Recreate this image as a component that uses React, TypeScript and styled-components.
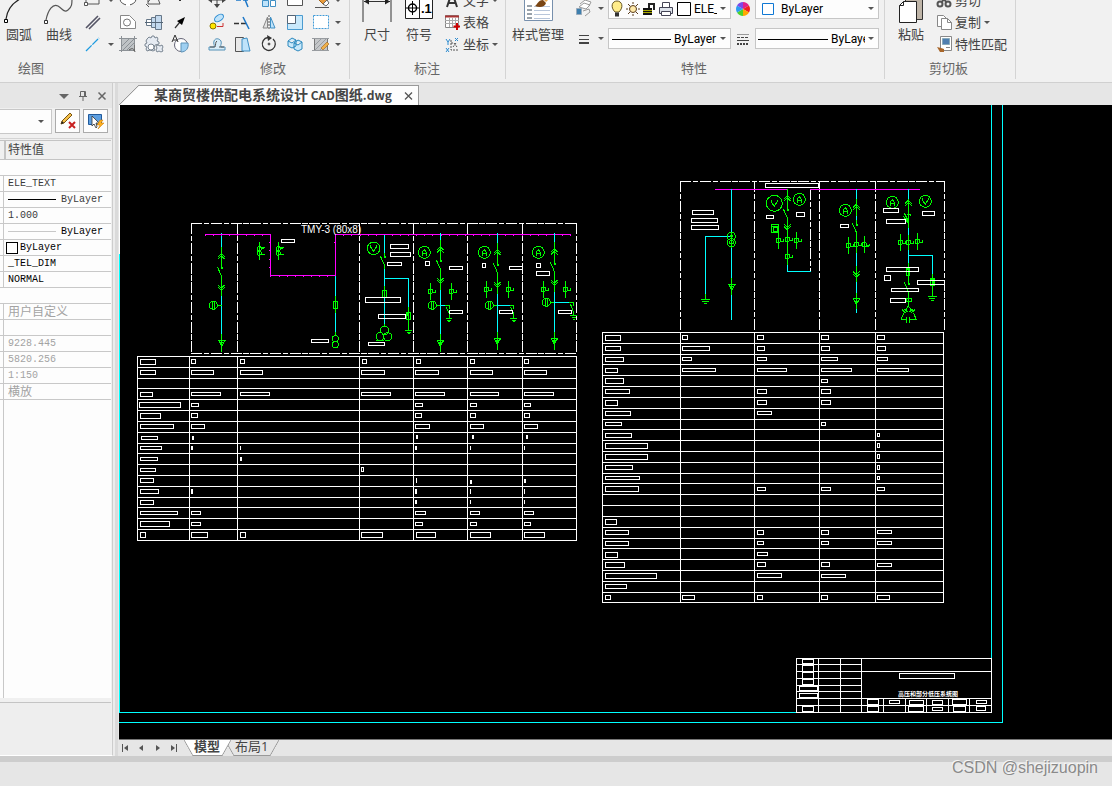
import React from "react";
import styled, { createGlobalStyle } from "styled-components";

const UI_FONT = `"Open Sans", "Noto Sans CJK SC", sans-serif`;
const GRID_FONT = `"Liberation Mono", "Noto Sans CJK SC", monospace`;

const GlobalStyle = createGlobalStyle`
  *, *::before, *::after { box-sizing: border-box; }
  body { margin: 0; background: #e6e6e6; font-family: ${UI_FONT}; font-size: 13px; color: #444; }
  button, select { font: inherit; color: inherit; }
  button { border: 0; padding: 0; background: none; }
`;

const Page = styled.div`
  display: flex;
  flex-direction: column;
  min-height: 100vh;
  position: relative;
  overflow: hidden;
`;

/* ---------- ribbon ---------- */

const Ribbon = styled.header`
  display: flex;
  background: #f1f1f1;
  border-bottom: 1px solid #d0d0d0;
  height: 83px;
  overflow: hidden;
`;

const Group = styled.section<{ $pad?: string }>`
  display: flex;
  flex-direction: column;
  flex: none;
  height: 79px;
  border-right: 1px solid #d4d4d4;
  padding: ${(p) => p.$pad ?? "0"};
`;

const GroupBody = styled.div`
  display: flex;
  align-items: flex-end;
  height: 55px;
  overflow: hidden;
`;

const GroupLabel = styled.h2<{ $left?: boolean }>`
  margin: 0;
  padding-top: 3px;
  padding-left: ${(p) => (p.$left ? "18px" : "0")};
  text-align: ${(p) => (p.$left ? "left" : "center")};
  font-size: 13px;
  font-weight: 400;
  line-height: 20px;
  color: #666;
`;

const BigButton = styled.button<{ $w: number }>`
  display: flex;
  flex-direction: column;
  align-items: center;
  flex: none;
  width: ${(p) => p.$w}px;
  white-space: nowrap;
  > span { line-height: 20px; height: 20px; }
  > i { height: 11px; padding-top: 3px; }
`;

const IconGrid = styled.div<{ $cols: string }>`
  display: grid;
  grid-template-columns: ${(p) => p.$cols};
  grid-auto-rows: 22px;
`;

const Tool = styled.button`
  display: grid;
  place-items: center;
`;

const ToolList = styled.div`
  display: flex;
  flex-direction: column;
  margin-left: 4px;
`;

const ListTool = styled.button`
  display: flex;
  align-items: center;
  height: 22px;
  white-space: nowrap;
  gap: 3px;
  line-height: 20px;
`;

const Caret = styled.span`
  display: inline-block;
  width: 0;
  height: 0;
  border: 3px solid transparent;
  border-top-color: #555;
  border-bottom: 0;
`;

const CaretCell = styled.span`
  display: grid;
  place-items: center;
`;

const FieldGrid = styled.div`
  display: grid;
  grid-template-columns: 20px 14px 123px 24px 124px;
  grid-auto-rows: 21px;
  row-gap: 9px;
  margin-left: 7px;
  padding-bottom: 6px;
`;

const Field = styled.label`
  display: flex;
  align-items: center;
  gap: 3px;
  min-width: 0;
  padding: 0 4px 0 2px;
  background: #fdfdfd;
  border: 1px solid #c6c6c6;
  color: #000;
  svg { flex: none; }
`;

const FieldSelect = styled.select`
  appearance: none;
  flex: 1;
  min-width: 0;
  border: 0;
  padding: 0;
  background: transparent;
  font-family: Roboto, "Noto Sans CJK SC", sans-serif;
  font-size: 12px;
  line-height: 18px;
  outline: 0;
`;

/* ---------- work area ---------- */

const Main = styled.main`
  display: flex;
  flex: 1;
  min-height: 0;
`;

const SidePanel = styled.aside`
  display: flex;
  flex-direction: column;
  width: 113px;
  flex: none;
  background: #f0f0f0;
  border-right: 1px solid #cdcdcd;
  border-bottom: 1px solid #fff;
`;

const Splitter = styled.div`
  width: 6px;
  flex: none;
  background: #dadada;
  border-left: 2px solid #ececec;
  border-right: 1px solid #e6e6e6;
`;

const PanelTitle = styled.div`
  display: flex;
  justify-content: flex-end;
  align-items: center;
  gap: 9px;
  height: 25px;
  padding-right: 5px;
  background: #e6e6e6;
  button { display: grid; }
`;

const PanelTools = styled.div`
  display: flex;
  gap: 3px;
  height: 30px;
  padding-top: 1px;
`;

const ObjectPicker = styled.label`
  display: flex;
  align-items: center;
  width: 52px;
  height: 25px;
  padding-right: 7px;
  background: #fdfdfd;
  border: 1px solid #c8c8c8;
  border-left: 0;
`;

const PanelButton = styled.button`
  display: grid;
  place-items: center;
  width: 25px;
  height: 24px;
  background: #fdfdfd;
  border: 1px solid #ababab;
`;

const PropertyArea = styled.div`
  display: flex;
  flex-direction: column;
  flex: 1;
  border-top: 1px solid #d4d4d4;
  padding: 1px 1px 0 0;
`;

const PropertyTable = styled.table`
  width: 100%;
  table-layout: fixed;
  border-spacing: 0;
  background: #fdfdfd;
  font-family: ${GRID_FONT};
  font-size: 10px;
  line-height: 15px;
`;

const HeadCell = styled.th`
  height: 20px;
  padding: 2px 0 0 2px;
  background: #f0f0f0;
  border-top: 1px solid #c4c4c4;
  border-bottom: 1px solid #c4c4c4;
  border-left: 2px solid #c4c4c4;
  text-align: left;
  font-size: 12px;
  font-weight: 400;
  line-height: 16px;
`;

const KeyHead = styled.th`
  width: 4px;
  padding: 0;
  background: #f0f0f0;
  border-top: 1px solid #c4c4c4;
  border-bottom: 1px solid #c4c4c4;
`;

const Cell = styled.td<{ $tone?: "dim" | "black" }>`
  height: 16px;
  padding: 0 0 0 4px;
  border-bottom: 1px solid #c8c8c8;
  white-space: nowrap;
  color: ${(p) => (p.$tone === "dim" ? "#a3a3a3" : p.$tone === "black" ? "#000" : "#3a3a3a")};
`;

const KeyCell = styled.td`
  padding: 0;
  border-right: 1px solid #c8c8c8;
  border-bottom: 1px solid #c8c8c8;
`;

const CellLine = styled.span<{ $big?: boolean }>`
  display: flex;
  align-items: center;
  gap: 5px;
  height: 15px;
  padding-top: ${(p) => (p.$big ? "3px" : "0")};
  font-size: ${(p) => (p.$big ? "12px" : "10px")};
`;

const Swatch = styled.span`
  width: 12px;
  height: 12px;
  margin: 0 -3px 0 -2px;
  border: 1px solid #000;
  background: #fff;
`;

const Stroke = styled.span<{ $light?: boolean }>`
  width: 48px;
  height: 1px;
  background: ${(p) => (p.$light ? "#c8c8c8" : "#000")};
`;

const PropertyRest = styled.div`
  flex: 1;
  background: linear-gradient(#c8c8c8, #c8c8c8) 3px 0 / 1px 100% no-repeat #fdfdfd;
`;

const PropertyHint = styled.div`
  height: 57px;
  border-top: 4px solid #f0f0f0;
  margin-right: 1px;
  background: #eee;
  box-shadow: inset 0 1px #c4c4c4;
`;

const Workspace = styled.div`
  display: flex;
  flex-direction: column;
  flex: 1;
  min-width: 0;
`;

const DocBar = styled.nav`
  display: flex;
  align-items: flex-end;
  height: 22px;
  background: #e6e6e6;
`;

const DocTab = styled.div`
  display: flex;
  align-items: center;
  height: 20px;
  padding-right: 5px;
  background: #fdfdfd;
  border: solid #999;
  border-width: 1px 1px 0 0;
  margin-left: 20px;
  position: relative;
  &::before {
    content: "";
    position: absolute;
    right: 100%;
    top: -1px;
    width: 20px;
    height: 20px;
    background: linear-gradient(to bottom right, transparent 48%, #999 50%, #fdfdfd 53%);
  }
`;

const DocName = styled.a`
  padding: 0 12px 2px 15px;
  font-family: "Noto Sans CJK SC", sans-serif;
  font-size: 14px;
  line-height: 18px;
  font-weight: 700;
  color: #444;
  text-decoration: none;
  white-space: nowrap;
`;

const Latin = styled.span`
  font-size: 12px;
`;

const IconButton = styled.button`
  display: grid;
  place-items: center;
`;

const Canvas = styled.div`
  flex: 1;
  min-height: 0;
  display: flex;
  background: #000;
  > svg { display: block; width: 100%; height: auto; flex: 1; }
`;

const LayoutBar = styled.nav`
  display: flex;
  align-items: stretch;
  height: 17px;
  background: #e6e6e6;
  border-top: 1px solid #777;
`;

const Steps = styled.div`
  display: flex;
  align-items: center;
  justify-content: space-between;
  width: 59px;
  margin-right: 6px;
  padding-left: 2px;
`;

const LayoutTab = styled.a<{ $on?: boolean }>`
  display: flex;
  color: #444;
  font-weight: ${(p) => (p.$on ? 700 : 400)};
  text-decoration: none;
  line-height: 13px;
  margin-right: -6px;
  z-index: ${(p) => (p.$on ? 1 : 0)};
  > span {
    background: ${(p) => (p.$on ? "#fff" : "#e6e6e6")};
    border-bottom: 1px solid #999;
    padding: 0 2px 0 1px;
  }
  &::before, &::after {
    content: "";
    width: 9px;
    background: linear-gradient(to top right, transparent 46%, #999 50%, ${(p) => (p.$on ? "#fff" : "#e6e6e6")} 56%);
  }
  &::after {
    background: linear-gradient(to top left, transparent 46%, #999 50%, ${(p) => (p.$on ? "#fff" : "#e6e6e6")} 56%);
  }
`;

const StatusBar = styled.footer`
  height: 30px;
  background: #e6e6e6;
  border-top: 6px solid #cdcdcd;
`;

const Watermark = styled.p`
  position: absolute;
  right: 14px;
  bottom: 8px;
  margin: 0;
  font: 16px/20px "Liberation Sans", sans-serif;
  color: #8a8a8a;
  text-shadow: -1px -1px 0 #f6f6f6;
`;

/* ---------- icons ---------- */

type IconProps = { w?: number; h?: number; children: React.ReactNode };
const Icon = ({ w = 20, h = 20, children }: IconProps) => (
  <svg width={w} height={h} viewBox={`0 0 ${w} ${h}`} fill="none" stroke="#555" aria-hidden="true">
    {children}
  </svg>
);

const drawTools: Record<string, React.ReactNode> = {
  rect: <><path d="M3 3h13v11H3z" /><path d="M1.500 12.500h3v3h-3zM14.500 1.500h3v3h-3z" fill="#fff" /></>,
  ellipse: <><ellipse cx="10" cy="9" rx="8" ry="6" fill="#fff" /><path d="M8 13h4v3H8z" fill="#fff" stroke="none" /></>,
  outline: <path d="M4 2v12h12M2 14l3 3M4 12l8-9 4 11" />,
  point: <path d="M9 9h2v2H9z" fill="#333" stroke="none" />,
  doubleLine: <path d="M3 16L15 4M6 17L17 6" stroke="#556" strokeWidth="1.600" />,
  cloud: <><path d="M2.500 3.500h9l6 6v7h-15z" fill="#fff" stroke="#888" /><circle cx="9" cy="10.500" r="3.500" stroke="#777" /></>,
  shaft: <><path d="M2.500 7.500h5v6h-5z" fill="#fff" stroke="#678" /><path d="M7.500 5.500h4v10h-4zM11.500 3.500h6v14h-6z" fill="#c3d9ee" stroke="#678" /><path d="M1 10.500h18" stroke="#567" /></>,
  arrow: <><path d="M5 16l5-6" stroke="#333" strokeWidth="1.200" /><path d="M15 5L7 9l5 4z" fill="#000" stroke="none" /></>,
  line: <path d="M3 17L16 4" stroke="#1c9be0" strokeWidth="1.300" strokeDasharray="8 1" />,
  hatch: <><path d="M3.500 4.500h13v12h-13z" fill="#bfc3c6" stroke="#777" /><path d="M1 4.500h18M1 16.500h14M3.500 2v16M16.500 2v9M4 12l7-7M5 16L16 5M9 16l7-7" stroke="#8c9196" /><path d="M17 18c-1-4-3-4-6-2" /></>,
  gears: <><path d="M5 3l2 1 1-2h2l1 2 2-1 1 2-1 2 2 1v2l-4 1-1 3 1 2-2 1-3-1-3 1-1-2 1-2-2-1v-2l2-1-1-2 1-2z" fill="#e6ebf2" stroke="#7a8692" /><circle cx="7" cy="13" r="3" fill="#fff" stroke="#7a8692" /><path d="M12 12l2-1 2 1 2-1 1 2-1 2 1 2-2 1-2-1-2 1-1-2 1-2z" fill="#e6ebf2" stroke="#7a8692" /></>,
  sector: <><circle cx="11" cy="11" r="6.500" fill="#fff" stroke="#667" /><path d="M11 9h7c1 5-2 9-7 9z" fill="#9fd0f2" stroke="#5f93b8" /><path d="M2 8l3-7 3 7M3 6h4" stroke="#333" /></>,
};

const editTools: Record<string, React.ReactNode> = {
  move: <><path d="M10 2v15M3 10h14" stroke="#444" /><path d="M7 14l3 4 3-4zM5 7l-4 3 4 3zM15 7l4 3-4 3z" fill="#444" stroke="none" /></>,
  trim: <path d="M3 10h5M10 10h5M9 2l6 15" stroke="#1e78c8" strokeWidth="1.500" />,
  array: <><path d="M3.500 10.500h6v6h-6zM11.500 2.500h5v6h-5z" fill="#bfe3fa" stroke="#3f8fc4" /><path d="M11.500 10.500h5v6h-5zM3.500 2.500h6v6h-6z" fill="#fff" stroke="#3f8fc4" /></>,
  frame: <path d="M2.500 2.500h15v13h-15z" fill="#fff" />,
  erase: <><path d="M3 5l4-4 10 10-4 4z" fill="#e89b3c" stroke="#a15f16" /><path d="M12 14l4-4 2 3-3 3z" fill="#fff" stroke="#666" /><path d="M4 17.500h14" /></>,
  copy: <><ellipse cx="12" cy="6" rx="5" ry="3" fill="#bfe3fa" stroke="#2b8bd0" transform="rotate(-35 12 6)" /><circle cx="6" cy="14" r="3" fill="#ffe600" stroke="#8a7400" /><path d="M10 14.500h6V11" stroke="#c33" /></>,
  extend: <><path d="M1 11.500h5M8 11.500h5" stroke="#333" strokeWidth="1.500" /><path d="M10 5l6 12" stroke="#1e78c8" strokeWidth="1.500" /></>,
  mirror: <><path d="M8.500 5v11H4z" fill="#e4e4e4" stroke="#888" /><path d="M11.500 5v11H16z" fill="#bfe3fa" stroke="#3f8fc4" /><path d="M10 3v15" strokeDasharray="2 1" /></>,
  scale: <><path d="M2.500 3.500h15v14h-15z" fill="#c9e9fb" stroke="#4a9bd0" /><path d="M2.500 3.500h8v8h-8z" fill="#fff" stroke="#567" /></>,
  dash: <path d="M2.500 3.500h15v13h-15z" fill="#fff" stroke="#3f9bd8" strokeDasharray="2 1" />,
  offset: <><path d="M2 16h16v-3h-4c-1-2 1-3 0-6-2-3-6-3-7 0-1 3 1 4 0 6H2z" fill="#d8ecf8" stroke="#5592b8" /><path d="M3 13h5c1-2 0-5 2-6M12 13h5" /></>,
  stretch: <><path d="M2.500 3.500h8v14h-8z" fill="#e9e9e9" /><path d="M9 5l5-1 3 13H9z" fill="#bfe3fa" stroke="#3f8fc4" /></>,
  rotate: <><path d="M14 5a6.500 6.500 0 1 1-5-1.500" stroke="#333" strokeWidth="1.300" /><path d="M8 1l5 3-4 3z" fill="#333" stroke="none" /><circle cx="10" cy="10" r="1" fill="#333" /></>,
  blocks: <path d="M3 7l4-3 4 2v6l-4 2-4-2zM9 9l4-3 4 2v7l-4 2-4-2zM3 7l4 2 4-3M9 9l4 2 4-3" fill="#c9e9fb" stroke="#2b88bd" />,
  hatchEdit: <><path d="M3.500 4.500h13v12h-13z" fill="#c5c7c9" stroke="#777" /><path d="M1 4.500h17M1 16.500h17M4 11l6-6M4 16L15 5M9 16l7-7" stroke="#989ca0" /><path d="M10 14l6-6 2 2-6 6z" fill="#f0b04a" stroke="#a0641a" strokeWidth=".6" /></>,
};

const ToolIcon = ({ set, name }: { set: Record<string, React.ReactNode>; name: string }) => (
  <Tool type="button" aria-label={name}><Icon>{set[name]}</Icon></Tool>
);

const SmallCaret = () => <CaretCell><Caret /></CaretCell>;

/* ---------- drawing sheet ---------- */

/* The sheet geometry is stored in thirds of a screen pixel. */
const View = ({ x, y, children }: { x: number; y: number; children: React.ReactNode }) => (
  <g transform={`translate(${x} ${y}) scale(${1 / 3})`}>{children}</g>
);

const Boxes = ({ list }: { list: number[][] }) => (
  <path
    stroke="#fff"
    d={list
      .map(([a, b, c, d]) =>
        c - a <= 6
          ? `M${(a + c) / 2} ${b}V${d}`.repeat(1) + (c - a > 3 ? `M${a + 1.5} ${b}V${d}M${c - 1.5} ${b}V${d}` : "")
          : `M${a + 1.5} ${b + 1.5}H${c - 1.5}V${d - 1.5}H${a + 1.5}Z`
      )
      .join("")}
  />
);

const Grid = ({ xs, ys }: { xs: number[]; ys: number[] }) => (
  <path
    stroke="#fff"
    d={
      xs.map((x) => `M${x} ${ys[0] - 1}V${ys[ys.length - 1] + 1}`).join("") +
      ys.map((y) => `M${xs[0] - 1} ${y}H${xs[xs.length - 1] + 1}`).join("")
    }
  />
);

const G = ({ d }: { d: string }) => <path stroke="#0f0" d={d} />;
const C = ({ d }: { d: string }) => <path stroke="#0ff" d={d} />;
const M = ({ d }: { d: string }) => <path stroke="#f0f" d={d} />;
const Ring = ({ x, y, r }: { x: number; y: number; r: number }) => <circle cx={x} cy={y} r={r} stroke="#0f0" />;

const Meter = ({ x, y, r = 18, kind }: { x: number; y: number; r?: number; kind: "A" | "V" }) => (
  <>
    <Ring x={x} y={y} r={r} />
    <G
      d={
        kind === "A"
          ? `M${x - 7} ${y + 10}V${y}L${x} ${y - 9}L${x + 6} ${y}V${y + 10}M${x - 7} ${y + 3}H${x + 6}`
          : `M${x - 9} ${y - 10}V${y - 4}L${x} ${y + 9}L${x + 8} ${y - 4}V${y - 10}`
      }
    />
  </>
);

const up = (x: number, y: number) =>
  `M${x - 10} ${y + 9}L${x} ${y}L${x + 10} ${y + 9}M${x - 10} ${y + 16}L${x} ${y + 7}L${x + 10} ${y + 16}`;
const down = (x: number, y: number) =>
  `M${x - 10} ${y}L${x} ${y + 9}L${x + 10} ${y}M${x - 10} ${y + 7}L${x} ${y + 16}L${x + 10} ${y + 7}`;
const blade = (x: number, y: number) => `M${x - 12} ${y - 2}L${x} ${y + 25}M${x - 2} ${y}H${x + 5}M${x - 2} ${y + 3}H${x + 5}`;
const drop = (x: number, y: number) => `M${x - 11} ${y}H${x + 12}M${x - 8} ${y + 2}L${x} ${y + 17}L${x + 9} ${y + 2}M${x - 4} ${y + 7}H${x + 5}`;
const earth = (x: number, y: number) => `M${x - 10} ${y}H${x + 10}M${x - 6} ${y + 5}H${x + 7}M${x - 3} ${y + 10}H${x + 4}`;

const Sensor = ({ x, y, bar = true }: { x: number; y: number; bar?: boolean }) => (
  <>
    <Ring x={x} y={y} r={7} />
    <G d={`${bar ? `M${x} ${y - 26}V${y + 26}` : ""}M${x + 6} ${y + 2}H${x + 16}V${y - 3}M${x + 9} ${y + 4}H${x + 13}`} />
  </>
);

const Coil = ({ x, y }: { x: number; y: number }) => (
  <>
    <Ring x={x} y={y} r={12} />
    <G d={`M${x - 4} ${y - 11}V${y + 11}M${x + 4} ${y - 11}V${y + 11}`} />
  </>
);

const Feeder = ({ x, a, s, b, t, end }: { x: number; a: number; s: number; b: number; t: number; end: number }) => (
  <>
    <C d={`M${x} 55V${a}M${x} ${b + 20}V${t - 18}`} />
    <G d={`M${x} ${a - 20}V${s}M${x} ${s + 25}V${b + 36}M${x} ${t - 18}V${end}${up(x, a)}${blade(x, s)}${down(x, b)}${drop(x, t)}`} />
  </>
);

const ticks = (xs: number[], y: number) => xs.map((x) => `M${x} ${y}V${y + 5}`).join("");
const DASH = "33 5 16 5";

const leftBoxes = [
  [30,27,78,45],[183,27,198,42],[330,27,345,42],[696,27,711,42],[858,27,873,42],[1020,27,1035,42],[1182,27,1197,42],
  [30,60,78,75],[183,60,252,75],[330,60,399,75],[693,60,765,75],[855,60,927,75],[1020,60,1089,75],[1182,60,1251,75],
  [30,126,69,141],[183,126,273,138],[330,126,420,138],[693,126,783,138],[855,126,945,138],[1020,126,1107,138],[1182,126,1272,138],
  [27,156,153,174],[183,159,207,171],[855,159,879,171],[1020,159,1041,171],[1182,159,1203,171],
  [30,189,93,207],[183,189,204,204],[855,189,876,204],[1020,189,1038,204],[1182,189,1200,204],
  [30,222,132,237],[183,222,225,237],[855,222,900,237],[1020,222,1062,237],[1182,222,1224,237],
  [33,258,84,270],[186,258,192,270],[858,255,864,267],[1026,255,1032,267],[1188,255,1194,267],
  [30,288,96,300],[183,288,189,300],[330,288,333,300],[855,288,861,300],[1020,288,1023,300],[1182,288,1185,300],
  [30,321,84,333],[330,321,336,333],
  [30,354,78,366],[693,351,702,366],
  [30,384,72,399],[858,384,861,399],[1020,390,1026,402],[1182,387,1188,399],
  [30,417,87,432],[183,417,189,432],[855,417,861,432],[1020,417,1023,432],[1182,417,1185,432],
  [30,450,72,465],[855,450,861,462],[1020,450,1023,462],[1182,450,1185,462],
  [30,483,144,495],[183,483,213,495],[855,483,888,495],[1020,483,1050,495],[1182,483,1212,495],
  [30,513,120,531],[183,516,213,528],[855,516,879,528],[1020,516,1041,528],[1182,516,1203,528],
  [30,546,48,564],[183,546,234,564],[330,546,348,564],[693,546,759,564],[858,546,918,564],[1020,546,1083,564],[1182,546,1245,564],
];

const rightBoxes = [
  [30,21,78,39],[261,21,279,36],[486,21,507,36],[678,21,702,36],[846,21,870,36],
  [30,54,78,69],[261,54,345,69],[486,54,510,69],[678,54,705,69],[846,54,873,69],
  [30,87,87,102],[261,87,291,99],[486,87,516,99],[678,87,729,99],[846,87,879,99],
  [30,120,69,135],[261,120,363,132],[486,120,576,132],[678,120,771,132],[846,120,942,132],
  [30,150,87,168],[678,153,699,165],
  [30,183,105,198],[486,183,516,198],[678,183,708,198],
  [30,216,69,234],[486,216,516,231],[678,216,708,231],
  [30,249,108,264],[486,249,531,261],
  [30,282,81,294],[678,282,693,294],
  [30,315,111,330],[846,315,855,327],
  [30,345,159,363],[846,345,855,360],
  [30,378,159,396],[846,378,855,393],
  [30,411,114,426],[846,411,855,426],
  [30,444,135,456],[846,444,855,456],
  [30,474,132,492],[486,477,513,489],[678,477,708,489],[846,477,870,489],
  [30,573,66,591],
  [30,606,102,621],[486,606,507,621],[678,606,702,621],[846,606,891,618],
  [30,639,102,654],[486,639,507,651],[678,639,702,651],[846,639,891,651],
  [30,672,69,690],[486,672,519,684],
  [30,702,90,720],[486,702,513,717],[678,702,705,717],[846,705,891,717],
  [30,735,186,753],[486,735,561,750],[678,738,753,750],
  [30,768,96,783],
  [30,801,48,816],[261,801,300,816],[486,801,504,816],[678,801,699,816],[846,801,885,816],
];

const Drawing = () => (
  <svg viewBox="119 105 993 634" preserveAspectRatio="xMinYMin slice" role="img" aria-label="供配电系统图">
    <g fill="none" strokeWidth="3" shapeRendering="crispEdges">
      {/* sheet border */}
      <g strokeWidth="1">
        <path stroke="#fff" d="M119.500 105V254" />
        <path stroke="#0ff" d="M119.500 254V712.500H796M119 722.500H1002.500V105M991.500 105V658" />
      </g>

      {/* low-voltage diagram, incoming side */}
      <View x={185} y={215}>
        <path stroke="#fff" strokeDasharray={DASH} d="M19 25H1175M19 415H1175M19 25V415M157 25V415M523 25V415" />
        <C d="M109 55V98M109 243V357M451 184V243M451 293V351" />
        <M d={`M60 58H257V181H451V58H1158${ticks([62, 86, 110, 134, 158, 183, 208, 232], 58)}${ticks([257, 282, 306, 330, 355, 380, 404, 428], 181)}M251 82H257M251 106H257M251 133H257M251 157H257M451 82H447${ticks([476, 500, 525, 550, 574], 58)}`} />
        <G d={`M109 95V158M109 181V243M109 357V410${up(109, 116)}${blade(109, 157)}${down(109, 210)}${drop(110, 376)}M97 271H110`} />
        <Coil x={85} y={271} />
        <G d="M223 81V135M280 81V135M230 98H240M230 103L238 98M230 118H240M287 98H297M287 103L295 98M287 118H297" />
        <Ring x={223} y={101} r={6} /><Ring x={223} y={115} r={6} />
        <Ring x={280} y={101} r={6} /><Ring x={280} y={115} r={6} />
        <G d="M451 243V361M445 259H458V280H445Z" />
        <C d="M451 293V350" />
        <Ring x={451} y={371} r={9} /><Ring x={451} y={389} r={9} />
        <Boxes list={[[288,72,330,84],[378,372,432,384]]} />
        <Meter x={566} y={100} r={19} kind="V" />
      </View>

      {/* low-voltage diagram, outgoing feeders */}
      <View x={380} y={215}>
        <path stroke="#fff" strokeDasharray={DASH} d="M100 25V415M262 25V415M427 25V415M589 25V415" />
        <M d={ticks([13, 37, 61, 86, 110, 134, 158, 183, 208, 232, 256, 280, 305, 329, 353, 377, 401, 426, 450, 475, 499, 523, 547, 571], 58)} />
        <C d="M13 60V113M13 160V213M13 190H86V276M13 247V327" />
        <G d={`M13 113V128M13 150V162M13 213V250M7 226H18V247H7ZM86 276V345M79 292H92V314H79Z${blade(13, 125)}${earth(86, 346)}M13 327V335M-12 376H12M82 292V304`} />
        <Ring x={13} y={347} r={13} /><Ring x={0} y={365} r={12} /><Ring x={23} y={365} r={12} />
        <Boxes list={[[30,87,87,102],[30,111,93,126],[21,141,66,153],[-45,246,63,264],[-6,297,78,312],[-36,381,15,393]]} />

        <Feeder x={181} a={96} s={137} b={189} t={376} end={410} />
        <Feeder x={352} a={104} s={147} b={201} t={370} end={404} />
        <Feeder x={523} a={102} s={144} b={195} t={370} end={404} />
        <Meter x={133} y={112} kind="A" /><Meter x={313} y={112} kind="A" /><Meter x={475} y={112} kind="A" />
        <Sensor x={151} y={229} /><Sensor x={214} y={229} />
        <Sensor x={319} y={223} /><Sensor x={385} y={223} />
        <Sensor x={490} y={223} /><Sensor x={556} y={223} />
        <Coil x={157} y={271} /><Coil x={328} y={271} /><Coil x={499} y={262} />
        <C d="M181 271H195M352 271H395M523 262H568" />
        <G d={`M169 271H181M195 271H209V281M198 276L207 294M207 294V310${earth(207, 310)}M340 271H352M390 271H401V281M391 276L400 294V310${earth(401, 310)}M511 262H523M566 262H581V272M571 266L579 288V302${earth(581, 302)}`} />
        <Boxes list={[[135,138,150,153],[207,153,249,165],[207,285,249,297],[306,144,318,159],[387,153,429,165],[357,285,399,297],[468,144,483,159],[468,168,510,183],[534,285,576,297]]} />
      </View>

      {/* high-voltage diagram */}
      <View x={675} y={175}>
        <path stroke="#fff" strokeDasharray={DASH} d="M16 19H808M16 19V480M238 19V472M433 19V472M601 19V472M808 19V472M406 43V290" />
        <M d="M120 43H338M406 43H735" />
        <C d="M169 43V434M169 184H91V358M337 270V289H407M544 43V140M544 233V413M700 43V72M700 158V276M700 241H772V298" />
        <G d={`M91 357V372M78 373H105M82 379H101M87 385H96M169 170V218M169 310V360${drop(170, 328)}`} />
        <Ring x={169} y={184} r={12} /><Ring x={169} y={203} r={12} />
        <G d="M164 179L175 187M175 179L164 187M162 200L169 195L176 200V206H162Z" />

        <G d={`M337 43V104M337 125V270${up(337, 62)}${blade(337, 104)}${down(337, 148)}`} />
        <Meter x={298} y={85} r={24} kind="V" /><Meter x={373} y={73} kind="A" />
        <Sensor x={310} y={196} /><Sensor x={337} y={193} bar={false} /><Sensor x={364} y={196} /><Sensor x={337} y={244} bar={false} />
        <path stroke="#0f0" d="M290 149H310V172H290ZM294 156H306V169H294ZM290 153H310" />

        <G d={`M544 72V122M544 136V150M544 168V233M544 273V321M544 353V402${up(544, 88)}${blade(544, 147)}${down(544, 290)}${drop(544, 371)}`} />
        <Meter x={511} y={106} kind="A" />
        <Sensor x={520} y={211} /><Sensor x={544} y={208} bar={false} /><Sensor x={568} y={209} />

        <G d={`M700 72V158M700 180V225M700 264V328M700 350V396${up(700, 76)}M687 115L700 136M684 122L700 145M690 118L697 136L692 140M697 118H705V122${blade(700, 324)}`} />
        <Meter x={652} y={82} kind="A" /><Meter x={751} y={79} kind="V" />
        <Sensor x={676} y={202} /><Sensor x={700} y={202} bar={false} /><Sensor x={727} y={199} />
        <G d="M694 279H704V302H694ZM697 282H703V300M772 297V363M766 310H777V331H766ZM769 314H775V328M758 364H786M763 370H781M767 376H777M694 370H710V380H694Z" />
        <G d="M700 393L690 408M700 393L712 408M681 404L692 414M720 404L708 414M686 414L679 432H695M716 414L723 432H704M695 426V444M704 426V444M688 402L698 412M712 402L703 412" />
        <Boxes list={[[270,24,432,39],[51,105,117,120],[48,129,129,144],[48,150,132,165],[273,120,297,132],[363,111,390,126],[495,147,522,159],[624,99,672,114],[633,132,693,147],[741,108,780,123],[633,276,732,291],[627,300,648,318],[726,315,810,330],[648,339,732,351],[645,369,693,384]]} />
      </View>

      {/* parameter tables */}
      <View x={130} y={350}>
        <Grid xs={[22,178,322,688,850,1012,1177,1339]} ys={[19,52,85,115,148,181,214,247,280,310,343,376,409,442,472,505,538,571]} />
        <Boxes list={leftBoxes} />
      </View>
      <View x={595} y={328}>
        <Grid xs={[22,256,478,673,841,1045]} ys={[13,46,79,109,142,175,208,241,274,304,337,370,403,436,466,499,532,565,598,631,661,694,727,760,793,823]} />
        <Boxes list={rightBoxes} />
      </View>

      {/* title block */}
      <View x={785} y={650}>
        <path stroke="#fff" d="M34 25H619V187H34ZM100 25V187M166 25V187M229 25V187M34 43H229M34 64H619M34 85H229M34 106H229M34 124H229M34 145H619M34 166H619M295 145V187M361 145V187M424 145V187M490 145V187M553 145V187" />
        <Boxes list={[[51,27,87,42],[51,45,87,66],[51,66,87,87],[51,87,87,105],[42,108,99,123],[42,129,99,144],[51,168,87,186],[342,69,510,87],[246,147,282,165],[246,168,282,186],[312,150,345,162],[372,150,417,165],[369,168,417,186],[441,150,474,165],[441,171,474,183],[501,147,546,165],[504,168,543,186],[573,150,606,162],[573,168,603,183]]} />
      </View>
    </g>
    <g fill="#fff" fontFamily='"Liberation Sans", "Noto Sans CJK SC", sans-serif'>
      <text x="301" y="233" fontSize="10">TMY-3 (80x8)</text>
      <text x="898" y="696" fontSize="6" fontWeight="700">高压和部分低压系统图</text>
    </g>
  </svg>
);

/* ---------- property grid ---------- */

type Prop = { text: string; tone?: "dim" | "black"; lead?: "line" | "light" | "swatch"; cjk?: boolean } | null;
const properties: Prop[] = [
  null,
  { text: "ELE_TEXT" },
  { text: "ByLayer", lead: "line" },
  { text: "1.000" },
  { text: "ByLayer", lead: "light", tone: "black" },
  { text: "ByLayer", lead: "swatch", tone: "black" },
  { text: "_TEL_DIM", tone: "black" },
  { text: "NORMAL", tone: "black" },
  null,
  { text: "用户自定义", tone: "dim", cjk: true },
  { text: "", tone: "dim" },
  { text: "9228.445", tone: "dim" },
  { text: "5820.256", tone: "dim" },
  { text: "1:150", tone: "dim" },
  { text: "横放", tone: "dim", cjk: true },
];

const Properties = () => (
  <PropertyTable>
    <thead>
      <tr><KeyHead aria-label="名称" /><HeadCell>特性值</HeadCell></tr>
    </thead>
    <tbody>
      {properties.map((p, i) =>
        p ? (
          <tr key={i}>
            <KeyCell />
            <Cell $tone={p.tone}>
              <CellLine $big={p.cjk}>
                {p.lead === "swatch" ? <Swatch /> : p.lead ? <Stroke $light={p.lead === "light"} /> : null}
                {p.text}
              </CellLine>
            </Cell>
          </tr>
        ) : (
          <tr key={i}><Cell colSpan={2} /></tr>
        )
      )}
    </tbody>
  </PropertyTable>
);

/* ---------- page ---------- */

export default function App() {
  return (
    <Page>
      <GlobalStyle />
      <Ribbon>
        <Group $pad="0 6px 0 0">
          <GroupBody>
            <BigButton type="button" $w={38}>
              <Icon w={32} h={32}>
                <path d="M3 27C4 19 8 12 17 7" stroke="#222" strokeWidth="1.200" />
                <path d="M1.500 27.500h3v3h-3z" fill="#fff" stroke="#000" />
              </Icon>
              <span>圆弧</span><i><Caret /></i>
            </BigButton>
            <BigButton type="button" $w={42}>
              <Icon w={32} h={32}>
                <path d="M3 28C5 18 10 11 15 14S21 21 25 18S29 12 29 6" stroke="#555" strokeWidth="1.200" />
                <path d="M1.500 28.500h3v3h-3z" fill="#fff" stroke="#333" />
              </Icon>
              <span>曲线</span><i><Caret /></i>
            </BigButton>
            <IconGrid $cols="26px 9px 26px 26px 26px">
              <ToolIcon set={drawTools} name="rect" /><SmallCaret /><ToolIcon set={drawTools} name="ellipse" /><ToolIcon set={drawTools} name="outline" /><ToolIcon set={drawTools} name="point" />
              <ToolIcon set={drawTools} name="doubleLine" /><span /><ToolIcon set={drawTools} name="cloud" /><ToolIcon set={drawTools} name="shaft" /><ToolIcon set={drawTools} name="arrow" />
              <ToolIcon set={drawTools} name="line" /><SmallCaret /><ToolIcon set={drawTools} name="hatch" /><ToolIcon set={drawTools} name="gears" /><ToolIcon set={drawTools} name="sector" />
            </IconGrid>
          </GroupBody>
          <GroupLabel $left>绘图</GroupLabel>
        </Group>

        <Group $pad="0 7px 0 4px">
          <GroupBody>
            <IconGrid $cols="repeat(5, 26px) 8px">
              {["move", "trim", "array", "frame", "erase"].map((n) => <ToolIcon key={n} set={editTools} name={n} />)}<SmallCaret />
              {["copy", "extend", "mirror", "scale", "dash"].map((n) => <ToolIcon key={n} set={editTools} name={n} />)}<SmallCaret />
              {["offset", "stretch", "rotate", "blocks", "hatchEdit"].map((n) => <ToolIcon key={n} set={editTools} name={n} />)}<SmallCaret />
            </IconGrid>
          </GroupBody>
          <GroupLabel>修改</GroupLabel>
        </Group>

        <Group $pad="0 7px 0 6px">
          <GroupBody>
            <BigButton type="button" $w={42}>
              <Icon w={32} h={32}>
                <path d="M2 8v22M30 8v22M3 9.500h26" stroke="#333" />
                <path d="M3 9.500l5-3v6zM29 9.500l-5-3v6z" fill="#222" stroke="none" />
              </Icon>
              <span>尺寸</span><i><Caret /></i>
            </BigButton>
            <BigButton type="button" $w={42}>
              <Icon w={32} h={32}>
                <path d="M2.500 5.500h27v21h-27zM16.500 5v21" fill="#fff" stroke="#222" />
                <circle cx="9.500" cy="16" r="4" stroke="#000" strokeWidth="1.500" />
                <path d="M3 16h13M9.500 9v14" stroke="#000" />
                <text x="18" y="21" fontSize="13" fontWeight="700" fontFamily="Liberation Sans" fill="#000" stroke="none">.1</text>
              </Icon>
              <span>符号</span><i><Caret /></i>
            </BigButton>
            <ToolList>
              <ListTool type="button">
                <Icon w={16} h={18}><path d="M3 16L7 4h2l4 12M5 12h6" stroke="#333" strokeWidth="2" /></Icon>文字<Caret />
              </ListTool>
              <ListTool type="button">
                <Icon w={16} h={18}>
                  <path d="M1.500 2.500h13v12h-13z" fill="#fff" stroke="#888" />
                  <path d="M1 3.500h14" stroke="#a33" strokeWidth="2" />
                  <path d="M1 7.500h14M1 10.500h14M5.500 5v9M8.500 5v9M11.500 5v9" stroke="#aaa" />
                  <path d="M13 10v7M9.500 13.500h7" stroke="#c00" strokeWidth="2" />
                </Icon>表格
              </ListTool>
              <ListTool type="button">
                <Icon w={16} h={18}>
                  <path d="M2 4l2 3 2-3M4 7v3M2 13l3 4M5 13l-3 4M11 3l3 3M14 3l-3 3" stroke="#2b8bd0" />
                  <path d="M7 5v10h7M7 8h3l3 4M12 8l-3 4" stroke="#555" strokeDasharray="2 1" />
                </Icon>坐标<Caret />
              </ListTool>
            </ToolList>
          </GroupBody>
          <GroupLabel>标注</GroupLabel>
        </Group>

        <Group $pad="0 5px 0 3px">
          <GroupBody>
            <BigButton type="button" $w={58}>
              <Icon w={32} h={32}>
                <path d="M2.500 2.500h28v26h-28z" fill="#fff" stroke="#7790ad" />
                <path d="M5 14h5M5 18h5M5 22h5M5 26h5" stroke="#345" />
                <path d="M12 14.500h16M12 18.500h16M12 22.500h16M12 26.500h16" stroke="#b8c6da" />
                <path d="M13 14c2-1 3-6 8-6l3 3c-1 4-6 5-11 3z" fill="#7a4512" stroke="none" />
                <path d="M23 9l5-5" stroke="#e8a850" strokeWidth="3" />
              </Icon>
              <span>样式管理</span><i><Caret /></i>
            </BigButton>
            <FieldGrid>
              <Tool type="button" aria-label="图层">
                <Icon><path d="M5 8l5-4 6 2-4 4zM6 5l5-4 6 2-2 4" fill="#fff" stroke="#999" /><path d="M2.500 9.500h5v6h-5z" fill="#3d7fae" stroke="#9ab" /><path d="M9 12l6-2 1 3-5 4" stroke="#999" /></Icon>
              </Tool>
              <SmallCaret />
              <Field>
                <Icon w={12} h={18}>
                  <path d="M4 12C-1 7 1 1 6 1S13 7 8 12z" fill="#ffec8a" stroke="#665522" />
                  <path d="M4 13.500h4M4 15.500h4" stroke="#333" strokeWidth="2" />
                </Icon>
                <Icon w={14} h={18}>
                  <circle cx="7" cy="9" r="3.500" fill="#ffe9a8" stroke="#5a3c1c" />
                  <path d="M7 2v2M7 14v2M0 9h2M12 9h2M2 4l2 2M10 12l2 2M12 4l-2 2M4 12l-2 2" stroke="#5a3c1c" />
                </Icon>
                <Icon w={12} h={18}>
                  <path d="M0 8h9v7H0z" fill="#111" stroke="none" />
                  <path d="M0 10.500h9M0 12.500h9" stroke="#a8a800" />
                  <path d="M6 8V4h5v6" stroke="#222" strokeWidth="2" />
                </Icon>
                <Icon w={16} h={18}>
                  <path d="M4.500 2.500h7v5h-7z" fill="#fff" stroke="#445" />
                  <path d="M1.500 7.500h13v6h-13z" fill="#dde2ea" stroke="#445" />
                  <path d="M3.500 11.500h9v4h-9z" fill="#fff" stroke="#445" />
                </Icon>
                <Icon w={14} h={16}><path d="M.5 1.500h13v13H.5z" fill="#fff" stroke="#000" /></Icon>
                <FieldSelect aria-label="图层"><option>ELE_</option></FieldSelect>
                <Caret />
              </Field>
              <Tool type="button" aria-label="颜色">
                <Icon w={16} h={16}>
                  <g stroke="none">
                    <path d="M8 8V1a7 7 0 0 1 6 3.500z" fill="#e0218a" /><path d="M8 8l6-3.500a7 7 0 0 1 0 7z" fill="#f02020" />
                    <path d="M8 8l6 3.500A7 7 0 0 1 8 15z" fill="#ffa800" /><path d="M8 8v7a7 7 0 0 1-6-3.500z" fill="#4cd32c" />
                    <path d="M8 8l-6 3.500a7 7 0 0 1 0-7z" fill="#2c9cf0" /><path d="M8 8L2 4.500A7 7 0 0 1 8 1z" fill="#7c48e8" />
                  </g>
                </Icon>
              </Tool>
              <Field>
                <Icon w={20} h={16}><path d="M4.500 2.500h11v11h-11z" fill="#fff" stroke="#0f78d4" /></Icon>
                <FieldSelect aria-label="颜色"><option>ByLayer</option></FieldSelect>
                <Caret />
              </Field>

              <Tool type="button" aria-label="线宽">
                <Icon><path d="M5 6.500h10M5 10.500h10" stroke="#444" /><path d="M5 14h10" stroke="#444" strokeWidth="2" /></Icon>
              </Tool>
              <SmallCaret />
              <Field>
                <Icon w={60} h={16}><path d="M1 8.500h59" stroke="#000" /></Icon>
                <FieldSelect aria-label="线宽"><option>ByLayer</option></FieldSelect>
                <Caret />
              </Field>
              <Tool type="button" aria-label="线型">
                <Icon w={16} h={16}><path d="M2 3.500h12" stroke="#999" /><path d="M2 6.500h12" stroke="#444" strokeDasharray="3 1" /><path d="M2 9.500h12" stroke="#444" /><path d="M2 13h12" stroke="#444" strokeWidth="2" strokeDasharray="2 1" /></Icon>
              </Tool>
              <Field>
                <Icon w={70} h={16}><path d="M0 8.500h70" stroke="#000" /></Icon>
                <FieldSelect aria-label="线型"><option>ByLayer</option></FieldSelect>
                <Caret />
              </Field>
            </FieldGrid>
          </GroupBody>
          <GroupLabel>特性</GroupLabel>
        </Group>

        <Group $pad="0 8px 0 5px">
          <GroupBody>
            <BigButton type="button" $w={42}>
              <Icon w={32} h={32}>
                <path d="M10.500 3.500h17v24h-17z" fill="#bfb5a8" stroke="#333" />
                <path d="M8.500 9.500h13v21h-17v-17z" fill="#fff" stroke="#222" />
                <path d="M4.500 13.500h4v-4" stroke="#222" />
              </Icon>
              <span>粘贴</span><i><Caret /></i>
            </BigButton>
            <ToolList>
              <ListTool type="button">
                <Icon w={16} h={18}><path d="M5 2l5 9M11 2L6 11" stroke="#555" strokeWidth="2" /><circle cx="4" cy="13" r="2.500" stroke="#555" strokeWidth="2" /><circle cx="12" cy="13" r="2.500" stroke="#555" strokeWidth="2" /></Icon>剪切
              </ListTool>
              <ListTool type="button">
                <Icon w={16} h={18}>
                  <path d="M1.500 2.500h6l3 3v8h-9z" fill="#fff" stroke="#888" />
                  <path d="M5.500 5.500h6l4 4v7h-10z" fill="#fff" stroke="#888" /><path d="M11.500 5.500v4h4" stroke="#888" />
                </Icon>复制<Caret />
              </ListTool>
              <ListTool type="button">
                <Icon w={16} h={18}>
                  <path d="M4.500 1.500h11v14h-11z" fill="#fff" stroke="#888" />
                  <path d="M6.500 3.500h7v6h-7z" fill="#4f7fb0" stroke="#8ab" /><path d="M10 12.500h4" stroke="#888" />
                  <path d="M1 12l4 1 3 1v3H4z" fill="#a8662a" stroke="none" />
                </Icon>特性匹配
              </ListTool>
            </ToolList>
          </GroupBody>
          <GroupLabel>剪切板</GroupLabel>
        </Group>
      </Ribbon>

      <Main>
        <SidePanel>
          <PanelTitle>
            <button type="button" aria-label="菜单"><Icon w={10} h={12}><path d="M0 4h10l-5 5z" fill="#666" stroke="none" /></Icon></button>
            <button type="button" aria-label="固定"><Icon w={10} h={12}><path d="M2.500 1.500h5v5h-5zM6.500 2v4M1 6.500h8M5 7v4" stroke="#666" /></Icon></button>
            <button type="button" aria-label="关闭"><Icon w={10} h={12}><path d="M1.500 2.500l7 7M8.500 2.500l-7 7" stroke="#666" strokeWidth="1.500" /></Icon></button>
          </PanelTitle>
          <PanelTools>
            <ObjectPicker><FieldSelect aria-label="对象"><option></option></FieldSelect><Caret /></ObjectPicker>
            <PanelButton type="button" aria-label="清除选择">
              <Icon><path d="M3 13l1-3 8-8 2 2-8 8z" fill="#f4c04a" stroke="#7a5410" /><path d="M3 13l1-3 2 2z" fill="#222" stroke="none" /><path d="M11 11l6 6M17 11l-6 6" stroke="#c82020" strokeWidth="2" /></Icon>
            </PanelButton>
            <PanelButton type="button" aria-label="快速选择">
              <Icon><path d="M2.500 3.500h13v10h-13z" fill="#5d9fe0" stroke="#215a9c" /><path d="M6 5v10l2-2 2 4 1-1-1-4h3z" fill="#fff" stroke="#333" strokeWidth=".8" /><path d="M14 9l-3 5h3l-2 4 6-6h-3l2-3z" fill="#ffb020" stroke="#c87800" strokeWidth=".5" /></Icon>
            </PanelButton>
          </PanelTools>
          <PropertyArea>
            <Properties />
            <PropertyRest />
          </PropertyArea>
          <PropertyHint />
        </SidePanel>
        <Splitter />
        <Workspace>
          <DocBar>
            <DocTab>
              <DocName href="#drawing">某商贸楼供配电系统设计<Latin> CAD</Latin>图纸<Latin>.dwg</Latin></DocName>
              <IconButton type="button" aria-label="关闭图纸"><Icon w={9} h={10}><path d="M1 1.500l7 7M8 1.500l-7 7" stroke="#555" strokeWidth="1.300" /></Icon></IconButton>
            </DocTab>
          </DocBar>
          <Canvas id="drawing"><Drawing /></Canvas>
          <LayoutBar>
            <Steps>
              <IconButton type="button" aria-label="首个"><Icon w={8} h={8}><path d="M1.500 0v8" /><path d="M7 1v6L3 4z" fill="#555" stroke="none" /></Icon></IconButton>
              <IconButton type="button" aria-label="上一个"><Icon w={8} h={8}><path d="M6 1v6L2 4z" fill="#555" stroke="none" /></Icon></IconButton>
              <IconButton type="button" aria-label="下一个"><Icon w={8} h={8}><path d="M2 1v6l4-3z" fill="#555" stroke="none" /></Icon></IconButton>
              <IconButton type="button" aria-label="最后"><Icon w={8} h={8}><path d="M6.500 0v8" /><path d="M1 1v6l4-3z" fill="#555" stroke="none" /></Icon></IconButton>
            </Steps>
            <LayoutTab href="#model" $on><span>模型</span></LayoutTab>
            <LayoutTab href="#layout1"><span>布局1</span></LayoutTab>
          </LayoutBar>
        </Workspace>
      </Main>
      <StatusBar />
      <Watermark>CSDN @shejizuopin</Watermark>
    </Page>
  );
}
